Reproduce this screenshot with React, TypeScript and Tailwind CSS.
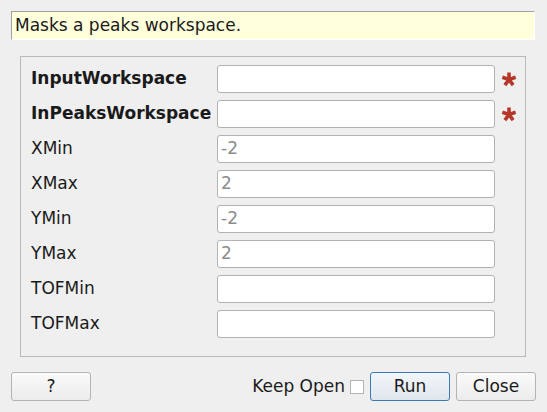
import React from 'react';

type Field = { name: string; value?: string; required?: boolean };

const FIELDS: Field[] = [
  { name: 'InputWorkspace', required: true },
  { name: 'InPeaksWorkspace', required: true },
  { name: 'XMin', value: '-2' },
  { name: 'XMax', value: '2' },
  { name: 'YMin', value: '-2' },
  { name: 'YMax', value: '2' },
  { name: 'TOFMin' },
  { name: 'TOFMax' },
];

function Asterisk() {
  const arms = [-90, -18, 54, 126, 198];
  return (
    <svg width="16" height="16" viewBox="0 0 16 16" className="shrink-0">
      {arms.map((a) => {
        const r = (a * Math.PI) / 180;
        return (
          <line
            key={a}
            x1="8"
            y1="8.5"
            x2={8 + 7 * Math.cos(r)}
            y2={8.5 + 7 * Math.sin(r)}
            stroke="#b5372a"
            strokeWidth="3.6"
            strokeLinecap="butt"
          />
        );
      })}
    </svg>
  );
}

function Button({ label, primary }: { label: string; primary?: boolean }) {
  return (
    <button
      className={
        primary
          ? 'w-[80px] h-[29px] rounded-[3px] border border-[#3b7ab4] bg-gradient-to-b from-[#f3f6f9] to-[#dfe6ec] text-[17px] text-[#1a1a1a]'
          : 'w-[80px] h-[29px] rounded-[3px] border border-[#b4b4b4] bg-gradient-to-b from-[#fafafa] to-[#ececec] text-[17px] text-[#1a1a1a]'
      }
    >
      {label}
    </button>
  );
}

export default function App() {
  return (
    <div
      className="w-[547px] h-[412px] bg-[#efefef] flex flex-col pt-[11px] pl-[11px] pr-[12px] text-[#1a1a1a]"
      style={{ fontFamily: '"DejaVu Sans", sans-serif' }}
    >
      {/* description */}
      <div className="h-[29px] bg-[#ffffdc] border-t border-l border-[#a0a0a0] border-b border-r border-b-white border-r-white pl-[3px] flex items-center text-[17px] leading-none">
        Masks a peaks workspace.
      </div>

      {/* property group */}
      <div className="mt-[16px] mx-[9px] h-[301px] border border-[#b9b9b9] pt-[8px] pl-[10px] flex flex-col gap-[7px]">
        {FIELDS.map((f) => (
          <div key={f.name} className="flex items-center h-[28px]">
            <div
              className={
                f.required
                  ? 'w-[186px] text-[17px] font-bold'
                  : 'w-[186px] text-[17px]'
              }
            >
              {f.name}
            </div>
            <div className="w-[278px] h-[28px] bg-white border border-[#b2b2b2] rounded-[3px] pl-[3px] flex items-center text-[17px] text-[#8c8c8c]">
              {f.value}
            </div>
            {f.required && (
              <div className="ml-[6px]">
                <Asterisk />
              </div>
            )}
          </div>
        ))}
      </div>

      {/* buttons */}
      <div className="mt-[15px] -mr-[1px] flex items-center">
        <Button label="?" />
        <div className="flex-1" />
        <span className="text-[17px]">Keep Open</span>
        <div className="ml-[5px] w-[14px] h-[14px] bg-white border border-[#b4b4b4]" />
        <div className="ml-[6px]">
          <Button label="Run" primary />
        </div>
        <div className="ml-[6px]">
          <Button label="Close" />
        </div>
      </div>
    </div>
  );
}
